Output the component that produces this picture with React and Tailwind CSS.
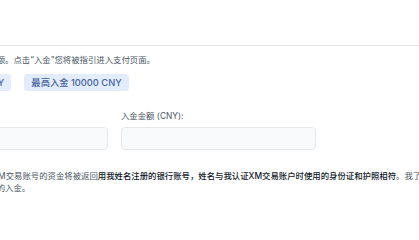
export default function App() {
  return (
    <div className="w-[419px] h-[240px] overflow-hidden bg-white font-['Inter','Noto_Sans_CJK_SC',sans-serif] text-[8.4px] leading-[12px] text-[#4b5563]">
      <div className="h-[45px]" />
      <div className="border-t border-[#e5e7eb]" />
      <div className="-ml-[87px] w-[700px] pt-[8px]">
        <p>请输入您希望入金的金额。点击“入金”您将被指引进入支付页面。</p>

        <div className="flex gap-[13px] mt-[8px]">
          <span className="h-[17px] px-[7px] flex items-center rounded-[3px] bg-[#e3ecfa] text-[#46639f] text-[9.3px] font-medium">
            最低入金 1000 CNY
          </span>
          <span className="h-[17px] px-[7px] flex items-center rounded-[3px] bg-[#e3ecfa] text-[#46639f] text-[9.3px] font-medium">
            最高入金 10000 CNY
          </span>
        </div>

        <div className="grid grid-cols-[195px_195px] gap-x-[13px] mt-[19px]">
          <div>
            <label className="block mb-[5px]">银行 (CNY):</label>
            <div className="h-[23px] rounded-[4px] border border-[#e5e7eb] bg-[#f9fafb]" />
          </div>
          <div>
            <label className="block mb-[5px]">入金金额 (CNY):</label>
            <div className="h-[23px] rounded-[4px] border border-[#e5e7eb] bg-[#f9fafb]" />
          </div>
        </div>

        <p className="mt-[20px] w-[520px] indent-[4px]">
          我确认同意，从我的XM交易账号的资金将被返回
          <span className="font-medium text-[#111827]">用我姓名注册的银行账号，姓名与我认证XM交易账户时使用的身份证和护照相符</span>
          。我了解以上条款，并同意本次的入金。
        </p>
      </div>
    </div>
  );
}
